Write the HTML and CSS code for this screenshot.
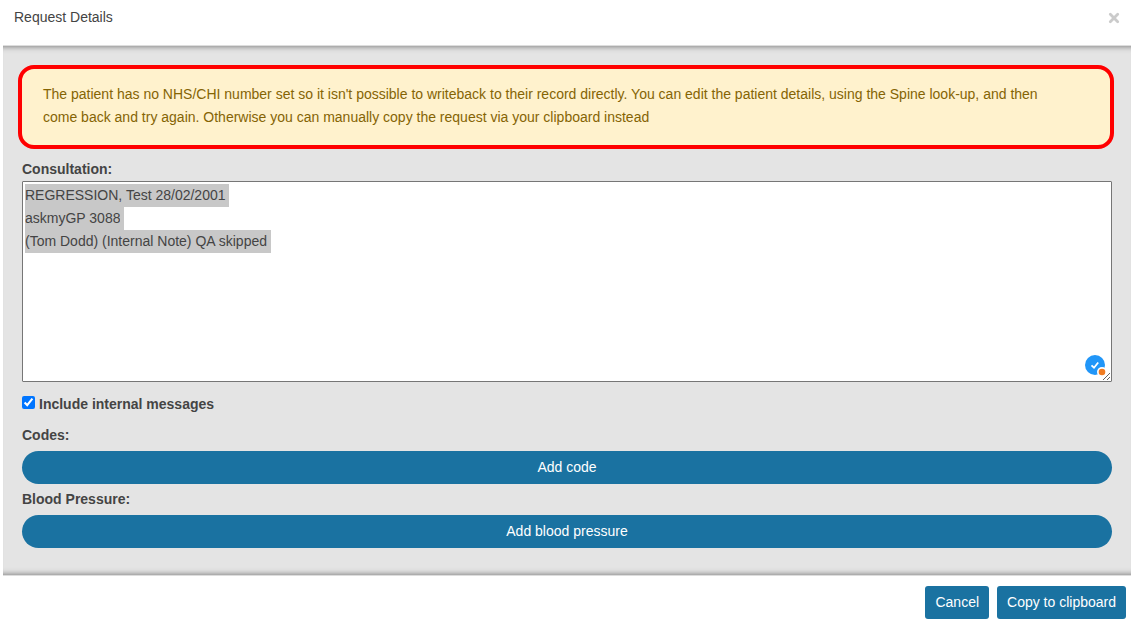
FILE: index.html
```html
<!DOCTYPE html>
<html lang="en">
<head>
<meta charset="utf-8">
<meta name="viewport" content="width=device-width, initial-scale=1">
<title>Request Details</title>
<link rel="stylesheet" href="styles.css">
</head>
<body>
<main class="dialog">
  <header class="dialog-header">
    <h1 class="dialog-title">Request Details</h1>
    <button class="close" type="button" aria-label="Close">
      <svg width="12" height="12" viewBox="0 0 12 12" aria-hidden="true"><path d="M2.3 2.3 9.7 9.7M9.7 2.3 2.3 9.7" stroke="#cbcbcb" stroke-width="2.8" stroke-linecap="round"/></svg>
    </button>
  </header>
  <section class="dialog-body">
    <div class="alert" role="alert">The patient has no NHS/CHI number set so it isn't possible to writeback to their record directly. You can edit the patient details, using the Spine look-up, and then come back and try again. Otherwise you can manually copy the request via your clipboard instead</div>
    <div class="form">
      <label class="label" for="consultation">Consultation:</label>
      <div class="editor">
        <textarea class="consultation" id="consultation" spellcheck="false">REGRESSION, Test 28/02/2001
askmyGP 3088
(Tom Dodd) (Internal Note) QA skipped
</textarea>
        <svg class="checker" width="22" height="22" viewBox="0 0 22 22" aria-hidden="true">
          <circle cx="10" cy="10" r="10" fill="#2196f8"/>
          <path d="M6.500 10.300 9 12.700 13.200 7.500" fill="none" stroke="#fff" stroke-width="1.800"/>
          <circle cx="17" cy="17" r="5" fill="#fff"/>
          <circle cx="17" cy="17" r="3.300" fill="#f07c22"/>
        </svg>
      </div>
      <div class="check-row">
        <input class="check" type="checkbox" id="internal" checked>
        <label class="label" for="internal">Include internal messages</label>
      </div>
      <h2 class="label">Codes:</h2>
      <button class="pill" type="button">Add code</button>
      <h2 class="label">Blood Pressure:</h2>
      <button class="pill" type="button">Add blood pressure</button>
    </div>
  </section>
  <footer class="dialog-footer">
    <button class="btn" type="button">Cancel</button>
    <button class="btn" type="button">Copy to clipboard</button>
  </footer>
</main>
<script src="script.js"></script>
</body>
</html>
```
FILE: styles.css
```css
* {
  box-sizing: border-box;
}

body {
  margin: 0;
  background: #fff;
  color: #444;
  font: 14px/23px "Liberation Sans", Arial, sans-serif;
}

button,
textarea {
  font: inherit;
}

.dialog {
  padding: 0 3px;
}

.dialog-header {
  display: flex;
  align-items: flex-start;
  justify-content: space-between;
  padding: 6px 11px 15px;
}

.dialog-title {
  margin: 0;
  font-size: 14px;
  font-weight: 400;
}

.close {
  display: flex;
  padding: 6px 0;
  border: 0;
  background: none;
}

.dialog-body {
  padding: 19px 17px 23px 15px;
  border-top: 1px solid #ddd;
  border-bottom: 1px solid #ddd;
  background: #e4e4e4;
  box-shadow: inset 0 7px 6px -7px #666, inset 0 -7px 6px -7px #666;
}

.alert {
  padding: 14px 36px 16px 21px;
  border: 4px solid #f00;
  border-radius: 16px;
  background: #fff2cd;
  color: #856404;
}

.form {
  display: flex;
  flex-direction: column;
  padding: 9px 2px 0 4px;
}

.label {
  margin: 0;
  font-size: 14px;
  font-weight: 700;
}

.editor {
  position: relative;
  display: flex;
}

.consultation {
  width: 100%;
  height: 201px;
  padding: 2px;
  border: 1px solid #767676;
  border-radius: 1px;
  outline: 0;
  background: #fff;
  color: #444;
  resize: vertical;
}

.consultation::selection {
  background: #c8c8c8;
  color: #444;
}

.checker {
  position: absolute;
  right: 5px;
  bottom: 5px;
  pointer-events: none;
}

.check-row {
  display: flex;
  align-items: center;
  gap: 4px;
  padding: 11px 0 8px;
}

.check {
  width: 13px;
  height: 13px;
  margin: 0 0 4px;
}

.pill {
  height: 33px;
  margin: 4px 0;
  border: 0;
  border-radius: 17px;
  background: #1a72a1;
  color: #fff;
}

.dialog-footer {
  display: flex;
  justify-content: flex-end;
  gap: 8px;
  padding: 10px 5px 5px;
}

.btn {
  height: 33px;
  padding: 0 10px;
  border: 0;
  border-radius: 3px;
  background: #1a72a1;
  color: #fff;
}
```
FILE: script.js
```js
const consultation = document.getElementById("consultation");
consultation.focus();
consultation.select();
```
